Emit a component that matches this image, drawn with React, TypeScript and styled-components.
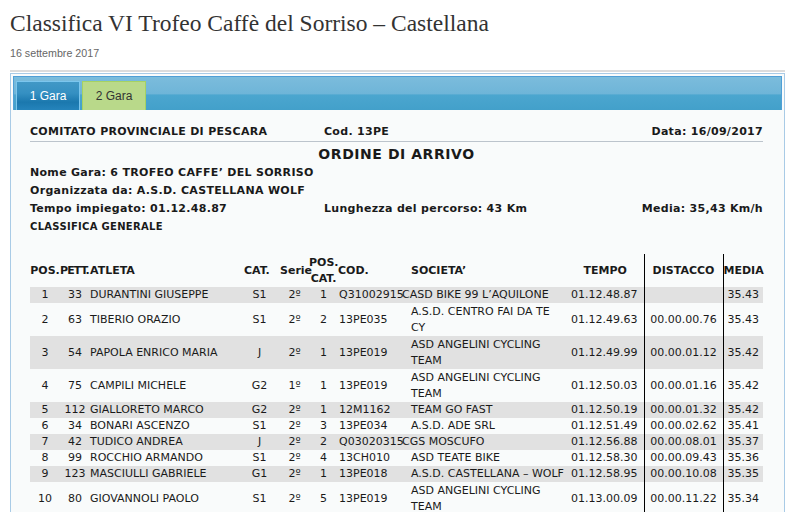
import React from "react";
import styled, { createGlobalStyle } from "styled-components";

const GlobalStyle = createGlobalStyle`
  html, body { margin: 0; padding: 0; background: #ffffff; }
  body { font-family: "DejaVu Sans", Verdana, sans-serif; }
`;

const Page = styled.div`
  padding: 0 10px;
  width: 775px;
`;

const Title = styled.h1`
  margin: 8px 0 0;
  font-family: "Liberation Serif", Georgia, serif;
  font-weight: normal;
  font-size: 23.5px;
  letter-spacing: 0;
  line-height: 30px;
  color: #333333;
  white-space: nowrap;
`;

const DateLine = styled.div`
  margin-top: 7px;
  font-family: "Liberation Sans", Arial, sans-serif;
  font-size: 10.7px;
  line-height: 16px;
  color: #666666;
`;

const Separator = styled.div`
  margin-top: 9px;
  border-top: 2px solid #dcdcdc;
`;

const Panel = styled.div`
  margin-top: 1px;
  border: 1px solid #a9cbe6;
  border-bottom: none;
  background: #f9fbfb;
  height: 440px;
`;

const TabBar = styled.div`
  margin: 2px 2px 0;
  padding: 4px 0 0 2px;
  height: 29px;
  border: 1px solid #4f9fd6;
  border-bottom: none;
  background: linear-gradient(
    to bottom,
    #7bbcdc 0%,
    #6fb5d8 50%,
    #4ba6cf 55%,
    #43a0ca 100%
  );
  display: flex;
  align-items: flex-end;
  gap: 2px;
`;

const Tab = styled.div<{ $active?: boolean }>`
  box-sizing: border-box;
  width: 64px;
  height: 29px;
  border: 1px solid ${(p) => (p.$active ? "#7cc6ee" : "#a6d262")};
  border-bottom: none;
  background: ${(p) =>
    p.$active
      ? "linear-gradient(to bottom, #4198c6 0%, #3590c2 40%, #1b78ae 72%, #2584bb 100%)"
      : "#b9d98a"};
  color: ${(p) => (p.$active ? "#ffffff" : "#333333")};
  font-family: "Liberation Sans", Arial, sans-serif;
  font-size: 12px;
  line-height: 28px;
  text-align: center;
`;

const Content = styled.div`
  padding: 13px 21px 0 19px;
  color: #1a1a1a;
`;

const InfoRow = styled.div<{ $ruled?: boolean }>`
  display: grid;
  grid-template-columns: 294px 1fr auto;
  font-weight: bold;
  font-size: 11px;
  letter-spacing: 0.3px;
  line-height: 18px;
  white-space: nowrap;
  border-bottom: ${(p) => (p.$ruled ? "1px solid #bcc4cc" : "none")};
`;

const Heading = styled.div`
  padding-top: 2px;
  font-weight: bold;
  font-size: 14px;
  letter-spacing: 0.55px;
  line-height: 20px;
  text-align: center;
`;

const SubHeading = styled.div`
  font-weight: bold;
  font-size: 10px;
  letter-spacing: 0.3px;
  line-height: 17px;
`;

const Results = styled.table`
  margin-top: 19px;
  width: 733px;
  table-layout: fixed;
  border-collapse: collapse;
  font-size: 11px;
  line-height: 16px;
  color: #1a1a1a;
`;

const HeadRow = styled.tr`
  height: 33px;
`;

const Row = styled.tr<{ $shade?: boolean; $tall?: boolean }>`
  height: ${(p) => (p.$tall ? "33px" : "16px")};
  background: ${(p) => (p.$shade ? "#e1e1e1" : "transparent")};
`;

type Align = "left" | "center" | "right";

const Th = styled.th<{ $align: Align; $padL?: number; $rule?: boolean; $tight?: boolean }>`
  padding: 0 0 0 ${(p) => p.$padL ?? 0}px;
  font-weight: bold;
  letter-spacing: ${(p) => (p.$tight ? "-0.9px" : "0")};
  text-align: ${(p) => p.$align};
  vertical-align: middle;
  white-space: ${(p) => (p.$tight ? "nowrap" : "normal")};
  border-left: ${(p) => (p.$rule ? "1px solid #000" : "none")};
  border-right: ${(p) => (p.$rule ? "1px solid #000" : "none")};
`;

const Td = styled.td<{
  $align: Align;
  $padL?: number;
  $padR?: number;
  $rule?: boolean;
  $nowrap?: boolean;
}>`
  padding: 0 ${(p) => p.$padR ?? 0}px 0 ${(p) => p.$padL ?? 0}px;
  text-align: ${(p) => p.$align};
  vertical-align: middle;
  white-space: ${(p) => (p.$nowrap ? "nowrap" : "normal")};
  overflow: visible;
  border-left: ${(p) => (p.$rule ? "1px solid #000" : "none")};
  border-right: ${(p) => (p.$rule ? "1px solid #000" : "none")};
`;

const widths = [30, 30, 154, 36, 29, 29, 64, 165, 77, 79, 40];

type Result = {
  pos: number;
  pett: number;
  name: string;
  cat: string;
  serie: string;
  posCat: number;
  cod: string;
  team: string;
  flush?: boolean;
  time: string;
  gap: string;
  avg: string;
  tall?: boolean;
};

const results: Result[] = [
  { pos: 1, pett: 33, name: "DURANTINI GIUSEPPE", cat: "S1", serie: "2º", posCat: 1, cod: "Q31002915", team: "CASD BIKE 99 L’AQUILONE", flush: true, time: "01.12.48.87", gap: "", avg: "35.43" },
  { pos: 2, pett: 63, name: "TIBERIO ORAZIO", cat: "S1", serie: "2º", posCat: 2, cod: "13PE035", team: "A.S.D. CENTRO FAI DA TE CY", time: "01.12.49.63", gap: "00.00.00.76", avg: "35.43", tall: true },
  { pos: 3, pett: 54, name: "PAPOLA ENRICO MARIA", cat: "J", serie: "2º", posCat: 1, cod: "13PE019", team: "ASD ANGELINI CYCLING TEAM", time: "01.12.49.99", gap: "00.00.01.12", avg: "35.42", tall: true },
  { pos: 4, pett: 75, name: "CAMPILI MICHELE", cat: "G2", serie: "1º", posCat: 1, cod: "13PE019", team: "ASD ANGELINI CYCLING TEAM", time: "01.12.50.03", gap: "00.00.01.16", avg: "35.42", tall: true },
  { pos: 5, pett: 112, name: "GIALLORETO MARCO", cat: "G2", serie: "2º", posCat: 1, cod: "12M1162", team: "TEAM GO FAST", time: "01.12.50.19", gap: "00.00.01.32", avg: "35.42" },
  { pos: 6, pett: 34, name: "BONARI ASCENZO", cat: "S1", serie: "2º", posCat: 3, cod: "13PE034", team: "A.S.D. ADE SRL", time: "01.12.51.49", gap: "00.00.02.62", avg: "35.41" },
  { pos: 7, pett: 42, name: "TUDICO ANDREA", cat: "J", serie: "2º", posCat: 2, cod: "Q03020315", team: "CGS MOSCUFO", flush: true, time: "01.12.56.88", gap: "00.00.08.01", avg: "35.37" },
  { pos: 8, pett: 99, name: "ROCCHIO ARMANDO", cat: "S1", serie: "2º", posCat: 4, cod: "13CH010", team: "ASD TEATE BIKE", time: "01.12.58.30", gap: "00.00.09.43", avg: "35.36" },
  { pos: 9, pett: 123, name: "MASCIULLI GABRIELE", cat: "G1", serie: "2º", posCat: 1, cod: "13PE018", team: "A.S.D. CASTELLANA – WOLF", time: "01.12.58.95", gap: "00.00.10.08", avg: "35.35" },
  { pos: 10, pett: 80, name: "GIOVANNOLI PAOLO", cat: "S1", serie: "2º", posCat: 5, cod: "13PE019", team: "ASD ANGELINI CYCLING TEAM", time: "01.13.00.09", gap: "00.00.11.22", avg: "35.34", tall: true },
];

export default function App() {
  return (
    <Page>
      <GlobalStyle />
      <Title>Classifica VI Trofeo Caffè del Sorriso – Castellana</Title>
      <DateLine>16 settembre 2017</DateLine>
      <Separator />
      <Panel>
        <TabBar>
          <Tab $active>1 Gara</Tab>
          <Tab>2 Gara</Tab>
        </TabBar>
        <Content>
          <InfoRow $ruled>
            <span>COMITATO PROVINCIALE DI PESCARA</span>
            <span>Cod. 13PE</span>
            <span>Data: 16/09/2017</span>
          </InfoRow>
          <Heading>ORDINE DI ARRIVO</Heading>
          <InfoRow>
            <span>Nome Gara: 6 TROFEO CAFFE’ DEL SORRISO</span>
          </InfoRow>
          <InfoRow>
            <span>Organizzata da: A.S.D. CASTELLANA WOLF</span>
          </InfoRow>
          <InfoRow>
            <span>Tempo impiegato: 01.12.48.87</span>
            <span>Lunghezza del percorso: 43 Km</span>
            <span>Media: 35,43 Km/h</span>
          </InfoRow>
          <SubHeading>CLASSIFICA GENERALE</SubHeading>
          <Results>
            <colgroup>
              {widths.map((w, i) => (
                <col key={i} style={{ width: w }} />
              ))}
            </colgroup>
            <thead>
              <HeadRow>
                <Th $align="center">POS.</Th>
                <Th $align="left" $tight>PETT.</Th>
                <Th $align="left">ATLETA</Th>
                <Th $align="left">CAT.</Th>
                <Th $align="center">Serie</Th>
                <Th $align="center">POS. CAT.</Th>
                <Th $align="left">COD.</Th>
                <Th $align="left" $padL={9}>SOCIETA’</Th>
                <Th $align="center">TEMPO</Th>
                <Th $align="center" $rule>DISTACCO</Th>
                <Th $align="center">MEDIA</Th>
              </HeadRow>
            </thead>
            <tbody>
              {results.map((r, i) => (
                <Row key={r.pos} $shade={i % 2 === 0} $tall={r.tall}>
                  <Td $align="center">{r.pos}</Td>
                  <Td $align="center">{r.pett}</Td>
                  <Td $align="left" $nowrap>{r.name}</Td>
                  <Td $align="center" $padR={5}>{r.cat}</Td>
                  <Td $align="center">{r.serie}</Td>
                  <Td $align="center">{r.posCat}</Td>
                  <Td $align="left" $padL={1} $nowrap>{r.cod}</Td>
                  <Td $align="left" $padL={r.flush ? 0 : 9}>{r.team}</Td>
                  <Td $align="center" $padR={2}>{r.time}</Td>
                  <Td $align="center" $rule>{r.gap}</Td>
                  <Td $align="center">{r.avg}</Td>
                </Row>
              ))}
            </tbody>
          </Results>
        </Content>
      </Panel>
    </Page>
  );
}
